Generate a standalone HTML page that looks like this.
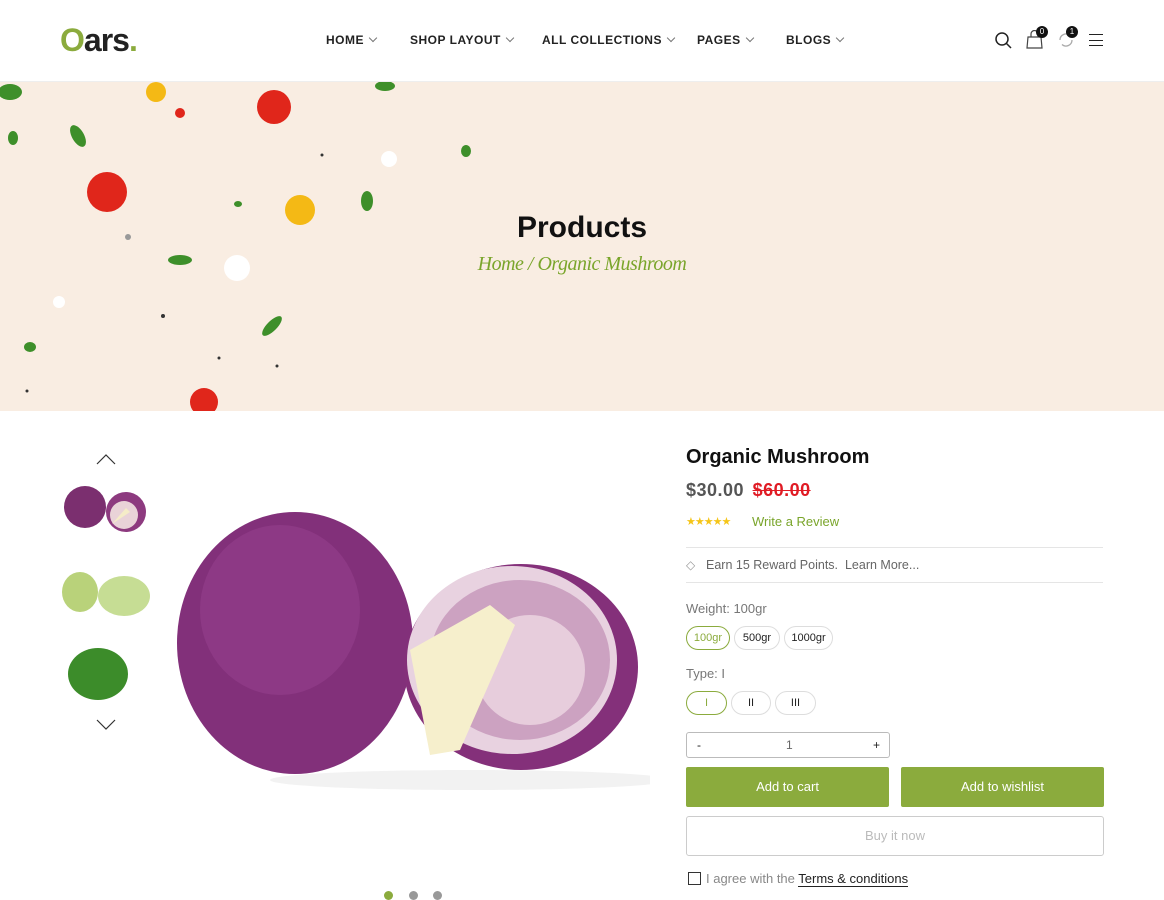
<!DOCTYPE html>
<html><head><meta charset="utf-8"><style>
*{margin:0;padding:0;box-sizing:border-box}
body{width:1164px;height:900px;overflow:hidden;background:#fff;font-family:"Liberation Sans",sans-serif;position:relative;color:#222}
.a{position:absolute}
.nav{font-size:12px;font-weight:bold;letter-spacing:.5px;color:#222;top:33px}
.nav:after{content:"";display:inline-block;width:5px;height:5px;border-right:1px solid #777;border-bottom:1px solid #777;transform:rotate(45deg);margin-left:6px;position:relative;top:-3px}
.pill{border:1px solid #ddd;border-radius:13px;height:24px;font-size:11px;text-align:center;line-height:22px;color:#222}
.g{border-color:#8bab3d;color:#8bab3d}
.btn{background:#8bab3d;color:#fff;font-size:13px;text-align:center;line-height:40px;border-radius:2px;height:40px;width:203px;top:767px}
</style></head><body>
<!-- header -->
<div class="a" style="left:60px;top:22px;font-size:32px;font-weight:bold;color:#222;letter-spacing:-1px"><span style="color:#8bab3d">O</span>ars<span style="color:#8bab3d">.</span></div>
<div class="a nav" style="left:326px">HOME</div>
<div class="a nav" style="left:410px">SHOP LAYOUT</div>
<div class="a nav" style="left:542px">ALL COLLECTIONS</div>
<div class="a nav" style="left:697px">PAGES</div>
<div class="a nav" style="left:786px">BLOGS</div>
<svg class="a" style="left:994px;top:31px" width="20" height="20" viewBox="0 0 20 20" fill="none" stroke="#222" stroke-width="1.5"><circle cx="8" cy="8" r="6"/><path d="M12.5 12.5L17 17"/></svg>
<svg class="a" style="left:1026px;top:30px" width="18" height="20" viewBox="0 0 18 20" fill="none" stroke="#444" stroke-width="1.2"><path d="M2 7h13l1 11H1z M5 7V4a3.5 3.5 0 0 1 7 0v3"/></svg>
<div class="a" style="left:1036px;top:26px;width:12px;height:12px;border-radius:6px;background:#111;color:#fff;font-size:8px;text-align:center;line-height:12px">0</div>
<svg class="a" style="left:1057px;top:31px" width="18" height="18" viewBox="0 0 18 18" fill="none" stroke="#aaa" stroke-width="1.3"><path d="M3 9a6 6 0 0 1 10-4.5M15 9a6 6 0 0 1-10 4.5"/></svg>
<div class="a" style="left:1066px;top:26px;width:12px;height:12px;border-radius:6px;background:#111;color:#fff;font-size:8px;text-align:center;line-height:12px">1</div>
<div class="a" style="left:1089px;top:34px;width:14px;height:12px;border-top:1.5px solid #222;border-bottom:1.5px solid #222"></div>
<div class="a" style="left:1089px;top:39.5px;width:14px;height:1.5px;background:#222"></div>
<div class="a" style="left:0;top:81px;width:1164px;height:1px;background:#eee"></div>
<!-- banner -->
<div class="a" style="left:0;top:82px;width:1164px;height:329px;background:#f9ede2;overflow:hidden">
 <svg width="1164" height="329">
  <g fill="#e0261b"><circle cx="274" cy="25" r="17"/><circle cx="107" cy="110" r="20"/><circle cx="180" cy="31" r="5"/><circle cx="204" cy="320" r="14"/></g>
  <g fill="#f4b915"><circle cx="156" cy="10" r="10"/><circle cx="300" cy="128" r="15"/></g>
  <g fill="#3e8f2a"><ellipse cx="10" cy="10" rx="12" ry="8"/><ellipse cx="78" cy="54" rx="6" ry="12" transform="rotate(-30 78 54)"/><ellipse cx="13" cy="56" rx="5" ry="7"/><ellipse cx="466" cy="69" rx="5" ry="6"/><ellipse cx="367" cy="119" rx="6" ry="10"/><ellipse cx="180" cy="178" rx="12" ry="5"/><ellipse cx="272" cy="244" rx="5" ry="13" transform="rotate(45 272 244)"/><ellipse cx="30" cy="265" rx="6" ry="5"/><ellipse cx="385" cy="4" rx="10" ry="5"/><ellipse cx="238" cy="122" rx="4" ry="3"/></g>
  <g fill="#fff"><circle cx="237" cy="186" r="13"/><circle cx="389" cy="77" r="8"/><circle cx="59" cy="220" r="6"/></g>
  <g fill="#333"><circle cx="322" cy="73" r="1.5"/><circle cx="163" cy="234" r="2"/><circle cx="219" cy="276" r="1.5"/><circle cx="277" cy="284" r="1.5"/><circle cx="27" cy="309" r="1.5"/><circle cx="128" cy="155" r="3" fill="#999"/></g>
 </svg>
</div>
<div class="a" style="left:0;top:211px;width:1164px;text-align:center;font-size:30px;font-weight:bold;color:#111">Products</div>
<div class="a" style="left:0;top:253px;width:1164px;text-align:center;font-family:'Liberation Serif',serif;font-style:italic;font-size:20px;color:#7aa52b;letter-spacing:-0.5px">Home / Organic Mushroom</div>
<!-- thumbnails -->
<svg class="a" style="left:96px;top:453px" width="20" height="12" fill="none" stroke="#333" stroke-width="1.2"><path d="M1 11L10 2l9 9"/></svg>
<svg class="a" style="left:96px;top:719px" width="20" height="12" fill="none" stroke="#333" stroke-width="1.2"><path d="M1 1l9 9 9-9"/></svg>
<svg class="a" style="left:60px;top:478px" width="92" height="60"><circle cx="25" cy="29" r="21" fill="#7b2f6f"/><circle cx="66" cy="34" r="20" fill="#8d3a7f"/><ellipse cx="64" cy="37" rx="14" ry="14" fill="#e9d3d8"/><path d="M52 46l14-16 4 4z" fill="#f5ecc8"/></svg>
<svg class="a" style="left:60px;top:566px" width="92" height="54"><ellipse cx="20" cy="26" rx="18" ry="20" fill="#b9d27a"/><ellipse cx="64" cy="30" rx="26" ry="20" fill="#c6dd94"/></svg>
<svg class="a" style="left:62px;top:640px" width="80" height="70"><ellipse cx="36" cy="34" rx="30" ry="26" fill="#3c8c2a"/></svg>
<!-- main image -->
<svg class="a" style="left:160px;top:500px" width="490" height="300">
 <ellipse cx="310" cy="280" rx="200" ry="10" fill="#f2f2f2"/>
 <ellipse cx="135" cy="143" rx="118" ry="131" fill="#82307a"/>
 <ellipse cx="120" cy="110" rx="80" ry="85" fill="#953f8c" opacity=".6"/>
 <ellipse cx="361" cy="167" rx="117" ry="103" fill="#84307a"/>
 <ellipse cx="352" cy="160" rx="105" ry="94" fill="#e8d2e0"/>
 <ellipse cx="360" cy="160" rx="90" ry="80" fill="#b57aa8" opacity=".55"/>
 <ellipse cx="370" cy="170" rx="55" ry="55" fill="#e7cddc"/>
 <path d="M250 150 L330 105 L355 125 L300 250 L270 255 Z" fill="#f6efcc"/>
</svg>
<div class="a" style="left:384px;top:891px;width:9px;height:9px;border-radius:5px;background:#8bab3d"></div>
<div class="a" style="left:409px;top:891px;width:9px;height:9px;border-radius:5px;background:#999"></div>
<div class="a" style="left:433px;top:891px;width:9px;height:9px;border-radius:5px;background:#999"></div>
<!-- info -->
<div class="a" style="left:686px;top:446px;font-size:20px;font-weight:bold;color:#111">Organic Mushroom</div>
<div class="a" style="left:686px;top:480px;font-size:18px;font-weight:bold;color:#555;letter-spacing:.5px">$30.00 <span style="color:#e01b24;text-decoration:line-through;margin-left:3px">$60.00</span></div>
<div class="a" style="left:686px;top:515px;font-size:11px;color:#f5c518;letter-spacing:-1px">★★★★★</div>
<div class="a" style="left:752px;top:514px;font-size:13px;color:#7aa52b">Write a Review</div>
<div class="a" style="left:686px;top:547px;width:417px;height:1px;background:#e5e5e5"></div>
<div class="a" style="left:686px;top:558px;font-size:12px;color:#999">◇</div>
<div class="a" style="left:706px;top:558px;font-size:12.5px;color:#666">Earn 15 Reward Points. &nbsp;Learn More...</div>
<div class="a" style="left:686px;top:582px;width:417px;height:1px;background:#e5e5e5"></div>
<div class="a" style="left:686px;top:601px;font-size:13px;color:#777">Weight: 100gr</div>
<div class="a pill g" style="left:686px;top:626px;width:44px">100gr</div>
<div class="a pill" style="left:734px;top:626px;width:46px">500gr</div>
<div class="a pill" style="left:784px;top:626px;width:49px">1000gr</div>
<div class="a" style="left:686px;top:666px;font-size:13px;color:#777">Type: I</div>
<div class="a pill g" style="left:686px;top:691px;width:41px">I</div>
<div class="a pill" style="left:731px;top:691px;width:40px">II</div>
<div class="a pill" style="left:775px;top:691px;width:41px">III</div>
<div class="a" style="left:686px;top:732px;width:204px;height:26px;border:1px solid #bbb;border-radius:3px;font-size:12px;line-height:24px">
 <span class="a" style="left:10px">-</span><span class="a" style="left:99px;color:#666">1</span><span class="a" style="left:186px">+</span></div>
<div class="a btn" style="left:686px">Add to cart</div>
<div class="a btn" style="left:901px">Add to wishlist</div>
<div class="a" style="left:686px;top:816px;width:418px;height:40px;border:1px solid #ccc;border-radius:3px;text-align:center;line-height:38px;font-size:13px;color:#bbb">Buy it now</div>
<div class="a" style="left:688px;top:872px;width:13px;height:13px;border:1.5px solid #333"></div>
<div class="a" style="left:706px;top:871px;font-size:13px;color:#888">I agree with the <span style="color:#222;border-bottom:1.5px solid #222">Terms &amp; conditions</span></div>
</body></html>
